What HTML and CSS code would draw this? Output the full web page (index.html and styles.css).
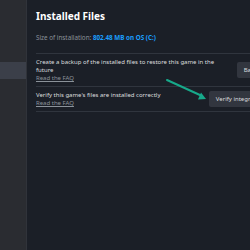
FILE: index.html
```html
<!DOCTYPE html>
<html lang="en">
<head>
    <meta charset="UTF-8">
    <title>Installed Files</title>
    <link rel="stylesheet" href="styles.css">
</head>
<body>
    <div class="sidebar">
        <div class="nav-item"></div>
        <div class="nav-item"></div>
        <div class="nav-item active"></div>
        <div class="nav-item"></div>
    </div>
    <div class="main">
        <h1>Installed Files</h1>
        <p class="size">Size of installation: <span class="size-value">802.48 MB on OS (C:)</span></p>

        <!-- Backup row -->
        <div class="row">
            <div class="row-text">
                <p>Create a backup of the installed files to restore this game in the future</p>
                <a href="#">Read the FAQ</a>
            </div>
            <button class="btn">Backup game files</button>
        </div>

        <!-- Verify row -->
        <div class="row">
            <div class="row-text">
                <p>Verify this game's files are installed correctly</p>
                <a href="#">Read the FAQ</a>
            </div>
            <button class="btn">Verify integrity of game files</button>
        </div>

        <svg class="arrow" width="50" height="30" viewBox="0 0 50 30">
            <line x1="2" y1="2" x2="36" y2="17.5" stroke="#17a98a" stroke-width="2" stroke-linecap="round"/>
            <polygon points="41,21 33,21.5 36,14.6" fill="#17a98a"/>
        </svg>
    </div>
</body>
</html>
```

FILE: styles.css
```css
html, body {
    height: 100%;
}
body {
    margin: 0;
    display: flex;
    background: #1b1f27;
    font-family: 'Noto Sans', 'Liberation Sans', sans-serif;
    color: #dcdedf;
    overflow: hidden;
}
.sidebar {
    width: 26px;
    flex-shrink: 0;
    background: #2a2c31;
    border-right: 1px solid #30333a;
    padding-top: 28px;
}
.nav-item {
    height: 17px;
}
.nav-item.active {
    background: #3b3f49;
}
.main {
    position: relative;
    flex: none;
    width: 266px;
    padding: 9px 0 0 9px;
}
h1 {
    margin: 0;
    font-size: 10px;
    font-weight: 700;
    color: #ffffff;
    line-height: 14px;
}
.size {
    margin: 11px 0 11px;
    font-size: 6.3px;
    color: #8b929a;
    line-height: 8px;
}
.size-value {
    color: #1a9fff;
    font-weight: 700;
}
.row {
    display: flex;
    align-items: center;
    gap: 10px;
    border-top: 1px solid #30353e;
    padding: 4px 0;
    white-space: nowrap;
}
.row:last-of-type {
    border-bottom: 1px solid #30353e;
}
.row-text {
    flex: 1;
    max-width: 190px;
}
.row-text p {
    margin: 0;
    font-size: 6px;
    line-height: 8px;
    color: #dcdedf;
    white-space: normal;
}
.row-text a {
    display: block;
    font-size: 6px;
    line-height: 8px;
    color: #8b929a;
}
.btn {
    flex-shrink: 0;
    margin-left: auto;
    background: #32363f;
    color: #dcdedf;
    border: none;
    border-radius: 2px;
    font-family: inherit;
    font-size: 6px;
    height: 16px;
    padding: 0 7px;
}
.arrow {
    position: absolute;
    left: 138px;
    top: 78px;
}
```
